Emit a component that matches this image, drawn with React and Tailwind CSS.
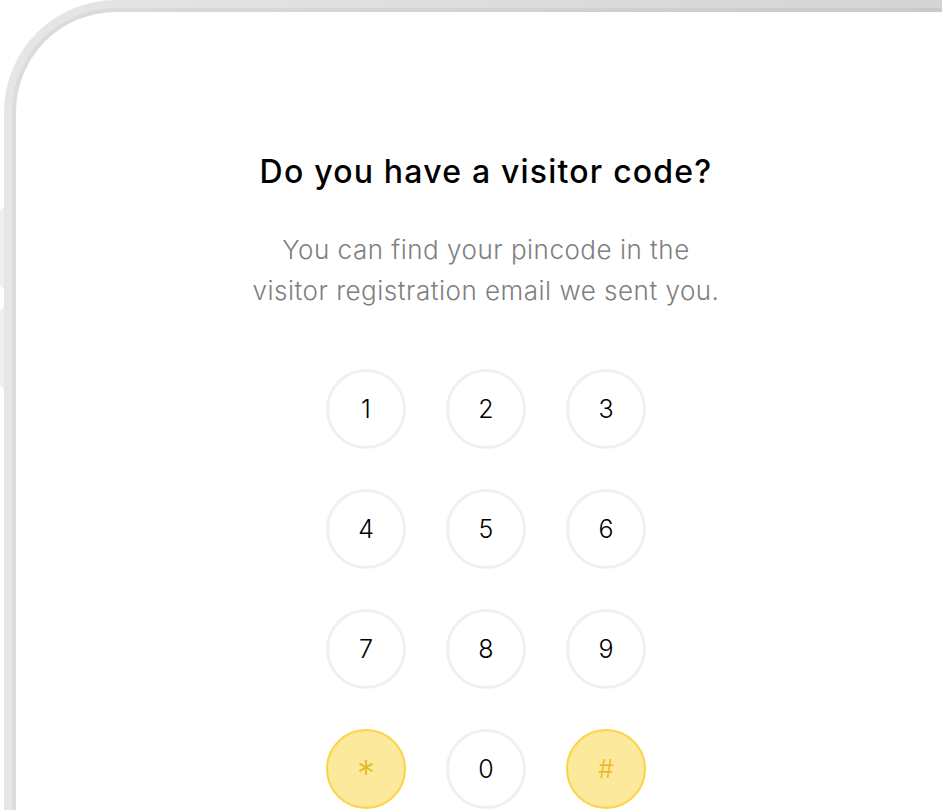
export default function App() {
  const keys = ['1', '2', '3', '4', '5', '6', '7', '8', '9', '*', '0', '#']

  return (
    <div className="w-[942px] h-[810px] overflow-hidden bg-white relative" style={{ fontFamily: 'Inter, "Noto Sans", sans-serif' }}>
      {/* side buttons */}
      <div className="absolute left-0 top-[208px] w-[6px] h-[80px] rounded-l bg-[#efefef]" />
      <div className="absolute left-0 top-[308px] w-[6px] h-[80px] rounded-l bg-[#efefef]" />

      <div className="pl-1 h-full">
        {/* bezel */}
        <div className="w-[1000px] h-[900px] rounded-tl-[112px] pl-2 pt-2 bg-gradient-to-r from-[#e6e6e6] to-[#d3d3d3] relative">
          <div className="h-full rounded-tl-[104px] pl-1 pt-1 bg-gradient-to-r from-[#dcdcdc] to-[#c8c8c8]">
            {/* screen */}
            <div className="w-[940px] h-full rounded-tl-[100px] bg-white pt-[140px] flex flex-col items-center">
              <h1 className="text-[32px] leading-[40px] font-medium text-black tracking-[1.2px]">
                Do you have a visitor code?
              </h1>
              <p className="mt-[37px] text-[26px] leading-[41px] font-light text-[#7f7f7f] text-center tracking-[0.5px]">
                You can find your pincode in the
                <br />
                visitor registration email we sent you.
              </p>

              <div className="mt-[58px] grid grid-cols-3 gap-10">
                {keys.map(k => {
                  const special = k === '*' || k === '#'
                  return (
                    <button
                      key={k}
                      className={`w-20 h-20 rounded-full flex items-center justify-center font-light ${
                        special
                          ? 'bg-[#fde99b] border-2 border-[#fbd448] text-[#e9b824]'
                          : 'bg-white border-[3px] border-[#f0f0f0] text-black'
                      } ${k === '*' ? 'text-[36px] pt-2' : 'text-[25px] pt-0.5'}`}
                    >
                      {k}
                    </button>
                  )
                })}
              </div>
            </div>
          </div>
        </div>
      </div>
    </div>
  )
}
